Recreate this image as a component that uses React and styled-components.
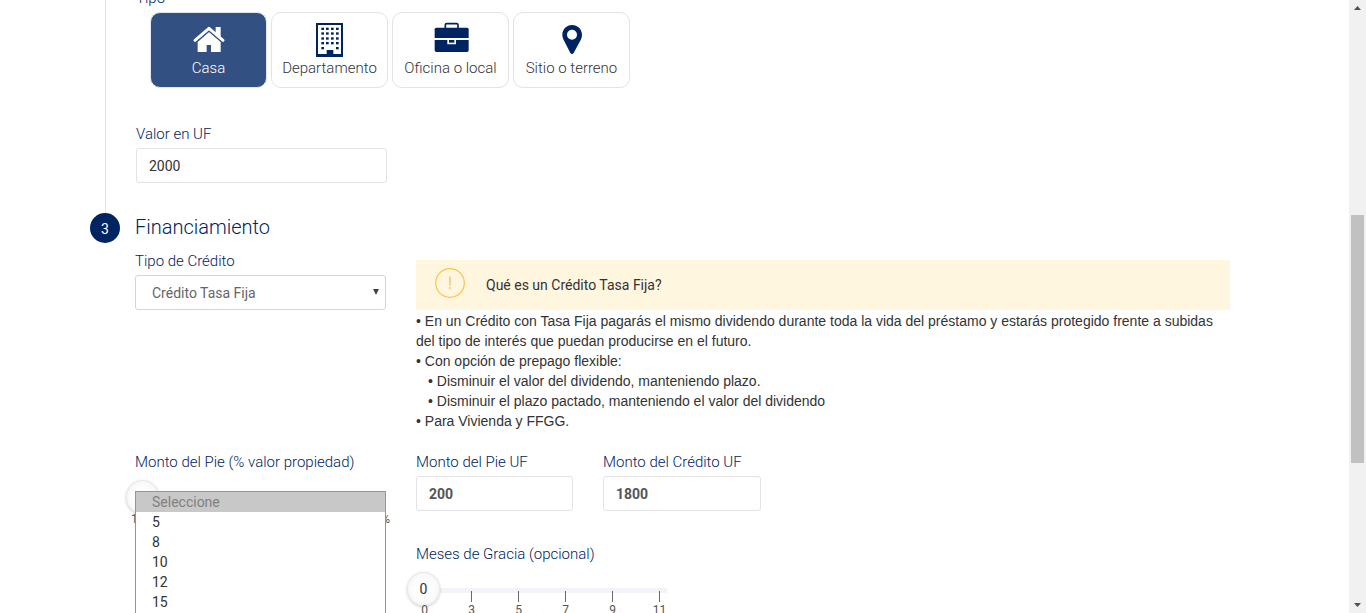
import React from "react";
import styled, { createGlobalStyle } from "styled-components";

const NAVY = "#002462";
const LINE = "#e3e3e5";

const GlobalStyle = createGlobalStyle`
  *, *::before, *::after { box-sizing: border-box; }
  body {
    margin: 0;
    background: #fff;
    color: #333;
    font-family: Roboto, "Liberation Sans", sans-serif;
    font-size: 14px;
    line-height: 20px;
  }
  input, select, button { font: inherit; }
`;

const Window = styled.div`
  display: flex;
  height: 100vh;
  overflow: hidden;
`;

const Main = styled.main`
  flex: 1;
  min-width: 0;
  overflow: hidden;
  padding: 0 119px 0 90px;
`;

const Step = styled.section`
  display: grid;
  grid-template-columns: 30px minmax(0, 1fr);
  column-gap: ${(p) => p.$gap}px;
`;

const Rail = styled.div`
  justify-self: center;
  width: 1px;
  background: ${LINE};
`;

const StepNumber = styled.span`
  display: flex;
  align-items: center;
  justify-content: center;
  width: 30px;
  height: 30px;
  border-radius: 50%;
  background: ${NAVY};
  color: #fff;
  padding-top: 2px;
`;

const PropertyFields = styled.div`
  margin-top: -12px;
  padding-bottom: 30px;
`;

const Title = styled.h2`
  margin: 0 0 10px;
  color: ${NAVY};
  font-size: 20px;
  font-weight: 300;
  line-height: 28px;
`;

const Label = styled.label`
  display: block;
  margin-bottom: 4px;
  color: ${NAVY};
  font-size: 15px;
  font-weight: 300;
  line-height: 20px;
  white-space: nowrap;
`;

const TypeList = styled.div`
  display: flex;
  flex-wrap: wrap;
  gap: 4px;
  margin: 0 0 36px 14px;
`;

const TypeButton = styled.button`
  display: flex;
  flex-direction: column;
  align-items: center;
  width: 117px;
  padding: 9px 0;
  border: 1px solid ${(p) => (p.$active ? "#e3e8f0" : LINE)};
  border-radius: 10px;
  background: ${(p) => (p.$active ? "#335082" : "#fff")};
  color: ${(p) => (p.$active ? "#fff" : "#333")};
  font-size: 15px;
  font-weight: 300;
  line-height: 20px;
  white-space: nowrap;
`;

const TypeIcon = styled.svg`
  width: 40px;
  height: 36px;
  color: ${(p) => (p.$active ? "#fff" : NAVY)};
`;

const TextInput = styled.input`
  display: block;
  width: 100%;
  max-width: 251px;
  height: 35px;
  padding: 0 12px;
  border: 1px solid ${LINE};
  border-radius: 3px;
  background: #fff;
  color: ${(p) => (p.$strong ? "#555" : "#333")};
  font-weight: ${(p) => (p.$strong ? 700 : 400)};
`;

const Columns = styled.div`
  display: grid;
  grid-template-columns: 251px minmax(0, 1fr);
  column-gap: 30px;
  margin-bottom: 21px;
`;

const SelectBox = styled.div`
  position: relative;
  &::after {
    content: "";
    position: absolute;
    right: 7px;
    top: 14px;
    border: 3px solid transparent;
    border-top: 6px solid #444;
    border-bottom: 0;
    pointer-events: none;
  }
`;

const Select = styled.select`
  appearance: none;
  display: block;
  width: 100%;
  height: 35px;
  padding: 0 16px;
  border: 1px solid #d5d5d8;
  border-radius: 3px;
  background: #fff;
  color: #666;
`;

const Notice = styled.div`
  display: flex;
  align-items: center;
  gap: 21px;
  height: 50px;
  margin-top: 9px;
  padding: 0 19px;
  background: #fff6e0;
`;

const NoticeIcon = styled.svg`
  width: 30px;
  height: 30px;
  margin-bottom: 4px;
`;

const Details = styled.ul`
  margin: 0;
  padding: ${(p) => (p.$nested ? "0 0 0 12px" : "1px 0 0")};
  list-style: none;
  font-family: "Liberation Sans", Arial, sans-serif;
`;

const Detail = styled.li`
  &::before { content: "• "; }
`;

const Amounts = styled.div`
  display: grid;
  grid-template-columns: 157px 158px;
  column-gap: 30px;
  margin-bottom: 33px;
`;

const Field = styled.div`
  position: relative;
`;

const SliderBox = styled.div`
  position: relative;
  width: 260px;
  margin: 8px 0 0 -9px;
`;

const Slider = styled.input`
  appearance: none;
  display: block;
  width: 100%;
  height: 34px;
  margin: 0;
  background: linear-gradient(#f4f4f8, #f4f4f8) 17px 16px / 243px 5px no-repeat;
  &::-webkit-slider-thumb {
    appearance: none;
    width: 33px;
    height: 34px;
    border: 1px solid #e8e8e8;
    border-radius: 50%;
    background: radial-gradient(#fff 30%, #f3f3f3);
    box-shadow: 0 1px 3px rgba(0, 0, 0, 0.2);
  }
`;

const SliderValue = styled.output`
  position: absolute;
  left: 0;
  top: 0;
  width: 33px;
  line-height: 34px;
  text-align: center;
  pointer-events: none;
`;

const Scale = styled.div`
  display: grid;
  grid-template-columns: repeat(6, 47px);
  margin: -15px 0 0 -6px;
  color: #555;
  font-size: 12px;
  line-height: 14px;
  text-align: center;
`;

const Tick = styled.span`
  &::before {
    content: "";
    display: block;
    width: 1px;
    height: 11px;
    margin: 0 auto 1px;
    background: ${(p) => (p.$first ? "transparent" : "#667")};
  }
`;

const Limits = styled.div`
  display: flex;
  justify-content: space-between;
  margin: -2px -4px 0 5px;
  font-size: 12px;
  color: #555;
  line-height: 14px;
`;

const OptionMenu = styled.select`
  position: absolute;
  top: 39px;
  left: 0;
  width: 251px;
  height: 242px;
  padding: 0;
  border: 1px solid #7a96cf;
  border-radius: 0;
  background: #fff;
  color: #333;
  overflow: hidden;
  outline: 0;
`;

const Option = styled.option`
  height: 20px;
  min-height: 20px;
  padding: 2px 16px 0;
  line-height: 20px;
  &:disabled {
    background: #c8c8c8;
    color: #808080;
  }
`;

const ScrollBar = styled.div`
  display: flex;
  flex-direction: column;
  flex: 0 0 17px;
  padding: 0 2px;
  background: #f1f1f1;
`;

const ScrollArrow = styled.svg`
  width: 13px;
  height: 17px;
  fill: #505050;
`;

const ScrollPart = styled.div`
  flex: ${(p) => p.$share} 0 0;
  background: ${(p) => (p.$thumb ? "#c1c1c1" : "transparent")};
`;

const HomeDrawing = () => (
  <g fill="currentColor">
    <path d="M80 15h15v36L80 38z" />
    <path d="M18 55 60 19 102 55" fill="none" stroke="currentColor" strokeWidth="9" strokeLinejoin="round" strokeLinecap="round" />
    <path d="M26 60 60 30 95 60V90H66V69H53V90H26z" />
    <path d="M22 60 60 28 98 60" fill="none" stroke="#335082" strokeWidth="2" />
  </g>
);

const BuildingDrawing = () => (
  <g fill="currentColor">
    <path fillRule="evenodd" d="M18 3h81v102H18zM24 9v87h26V84h20v12h23V9z" />
    {[21, 35, 50, 64, 79].map((y, row) =>
      [38, 52, 67, 82]
        .filter((x, i) => row < 4 || i === 0 || i === 3)
        .map((x) => <rect key={`${x}-${y}`} x={x - 4} y={y - 4} width="8" height="7" />)
    )}
  </g>
);

const BriefcaseDrawing = () => (
  <g fill="currentColor">
    <path d="M43 18V9q0-4 4-4H77q4 0 4 4V18" fill="none" stroke="currentColor" strokeWidth="5" />
    <path d="M16 17H108q5 0 5 5V48H11V22q0-5 5-5z" />
    <path d="M11 54H49V67H75V54H113V85q0 5-5 5H16q-5 0-5-5z" />
    <path d="M54 54H70V62H54z" />
  </g>
);

const PinDrawing = () => (
  <path
    fill="currentColor"
    fillRule="evenodd"
    d="M60 9C44 9 31 22 31 38c0 8 3 14 6 20L55 93q5 7 10 0L84 58c3-6 6-12 6-20C90 22 77 9 60 9zM60 23a15 15 0 1 1 0 30a15 15 0 1 1 0-30z"
  />
);

const TYPES = [
  { name: "Casa", Drawing: HomeDrawing, active: true },
  { name: "Departamento", Drawing: BuildingDrawing },
  { name: "Oficina o local", Drawing: BriefcaseDrawing },
  { name: "Sitio o terreno", Drawing: PinDrawing },
];

export default function App() {
  return (
    <>
      <GlobalStyle />
      <Window>
        <Main>
          <Step $gap={16}>
            <Rail />
            <PropertyFields>
              <Label as="div" id="tipo">Tipo</Label>
              <TypeList role="group" aria-labelledby="tipo">
                {TYPES.map(({ name, Drawing, active }) => (
                  <TypeButton key={name} type="button" $active={active} aria-pressed={!!active}>
                    <TypeIcon $active={active} viewBox="0 0 120 108" aria-hidden="true">
                      <Drawing />
                    </TypeIcon>
                    {name}
                  </TypeButton>
                ))}
              </TypeList>
              <Label htmlFor="valor">Valor en UF</Label>
              <TextInput id="valor" defaultValue="2000" />
            </PropertyFields>
          </Step>

          <Step $gap={15}>
            <StepNumber>3</StepNumber>
            <div>
              <Title>Financiamiento</Title>
              <Columns>
                <Field>
                  <Label htmlFor="credito">Tipo de Crédito</Label>
                  <SelectBox>
                    <Select id="credito">
                      <option>Crédito Tasa Fija</option>
                    </Select>
                  </SelectBox>
                </Field>
                <div>
                  <Notice>
                    <NoticeIcon viewBox="0 0 30 30" fill="none" stroke="#ffc33c" aria-hidden="true">
                      <circle cx="15" cy="15" r="14.300" strokeWidth="1.200" />
                      <path d="M15 8.500v9M15 19v2" stroke="#fbb84e" strokeWidth="1.200" />
                    </NoticeIcon>
                    Qué es un Crédito Tasa Fija?
                  </Notice>
                  <Details>
                    <Detail>
                      En un Crédito con Tasa Fija pagarás el mismo dividendo durante toda la vida del préstamo y estarás
                      protegido frente a subidas del tipo de interés que puedan producirse en el futuro.
                    </Detail>
                    <Detail>
                      Con opción de prepago flexible:
                      <Details $nested>
                        <Detail>Disminuir el valor del dividendo, manteniendo plazo.</Detail>
                        <Detail>Disminuir el plazo pactado, manteniendo el valor del dividendo</Detail>
                      </Details>
                    </Detail>
                    <Detail>Para Vivienda y FFGG.</Detail>
                  </Details>
                </div>
              </Columns>
              <Columns>
                <Field>
                  <Label htmlFor="pie">Monto del Pie (% valor propiedad)</Label>
                  <SliderBox>
                    <Slider id="pie" type="range" min="10" max="90" defaultValue="10" />
                    <Limits>
                      <span>10%</span>
                      <span>90%</span>
                    </Limits>
                  </SliderBox>
                  <OptionMenu size="12" aria-label="Plazo">
                    <Option disabled>Seleccione</Option>
                    {[5, 8, 10, 12, 15].map((n) => (
                      <Option key={n}>{n}</Option>
                    ))}
                  </OptionMenu>
                </Field>
                <div>
                  <Amounts>
                    <Field>
                      <Label htmlFor="pie-uf">Monto del Pie UF</Label>
                      <TextInput id="pie-uf" $strong defaultValue="200" />
                    </Field>
                    <Field>
                      <Label htmlFor="credito-uf">Monto del Crédito UF</Label>
                      <TextInput id="credito-uf" $strong defaultValue="1800" />
                    </Field>
                  </Amounts>
                  <Label htmlFor="gracia">Meses de Gracia (opcional)</Label>
                  <SliderBox>
                    <Slider id="gracia" type="range" min="0" max="11" defaultValue="0" />
                    <SliderValue htmlFor="gracia">0</SliderValue>
                    <Scale>
                      {[0, 3, 5, 7, 9, 11].map((n) => (
                        <Tick key={n} $first={n === 0}>{n}</Tick>
                      ))}
                    </Scale>
                  </SliderBox>
                </div>
              </Columns>
            </div>
          </Step>
        </Main>
        <ScrollBar aria-hidden="true">
          <ScrollArrow viewBox="0 0 13 17"><path d="M3 10 6.500 6 10 10z" /></ScrollArrow>
          <ScrollPart $share={198} />
          <ScrollPart $share={248} $thumb />
          <ScrollPart $share={133} />
          <ScrollArrow viewBox="0 0 13 17"><path d="M3 7 6.500 11 10 7z" /></ScrollArrow>
        </ScrollBar>
      </Window>
    </>
  );
}
